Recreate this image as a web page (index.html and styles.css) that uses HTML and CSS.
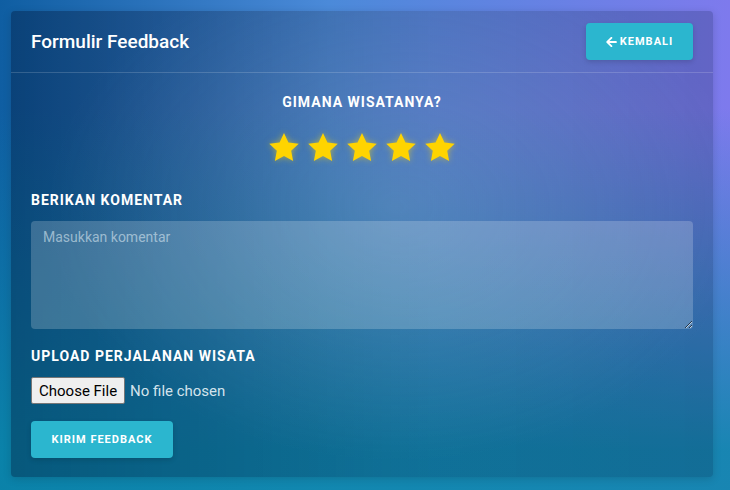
FILE: index.html
```html
<!DOCTYPE html>
<html lang="id">
<head>
<meta charset="utf-8">
<title>Formulir Feedback</title>
<link rel="stylesheet" href="styles.css">
</head>
<body>
<div class="card">
  <div class="card-header">
    <h1 class="title">Formulir Feedback</h1>
    <button class="btn btn-back" type="button">
      <svg class="arrow" viewBox="0 0 448 512" width="11" height="12"><path fill="currentColor" d="M257.5 445.1l-22.2 22.2c-9.4 9.4-24.6 9.4-33.9 0L7 273c-9.4-9.4-9.4-24.6 0-33.9L201.4 44.7c9.4-9.4 24.6-9.4 33.9 0l22.2 22.2c9.5 9.5 9.3 25-.4 34.3L136.6 216H424c13.3 0 24 10.7 24 24v32c0 13.3-10.7 24-24 24H136.6l120.5 114.8c9.8 9.3 10 24.8.4 34.3z"/></svg>
      KEMBALI
    </button>
  </div>
  <form class="card-body">
    <div class="question">GIMANA WISATANYA?</div>
    <div class="stars">
      <svg class="star" viewBox="0 0 24 23"><path d="M12 0.8l3.4 7.2 7.9 1-5.8 5.4 1.5 7.8L12 18.4l-7 3.8 1.5-7.8L0.7 9l7.9-1z"/></svg>
      <svg class="star" viewBox="0 0 24 23"><path d="M12 0.8l3.4 7.2 7.9 1-5.8 5.4 1.5 7.8L12 18.4l-7 3.8 1.5-7.8L0.7 9l7.9-1z"/></svg>
      <svg class="star" viewBox="0 0 24 23"><path d="M12 0.8l3.4 7.2 7.9 1-5.8 5.4 1.5 7.8L12 18.4l-7 3.8 1.5-7.8L0.7 9l7.9-1z"/></svg>
      <svg class="star" viewBox="0 0 24 23"><path d="M12 0.8l3.4 7.2 7.9 1-5.8 5.4 1.5 7.8L12 18.4l-7 3.8 1.5-7.8L0.7 9l7.9-1z"/></svg>
      <svg class="star" viewBox="0 0 24 23"><path d="M12 0.8l3.4 7.2 7.9 1-5.8 5.4 1.5 7.8L12 18.4l-7 3.8 1.5-7.8L0.7 9l7.9-1z"/></svg>
    </div>
    <label class="label label-first" for="komentar">BERIKAN KOMENTAR</label>
    <textarea id="komentar" class="comment" placeholder="Masukkan komentar"></textarea>
    <label class="label label-second" for="foto">UPLOAD PERJALANAN WISATA</label>
    <input id="foto" class="file" type="file">
    <div class="actions">
      <button class="btn btn-submit" type="button">KIRIM FEEDBACK</button>
    </div>
  </form>
</div>
</body>
</html>
```

FILE: styles.css
```css
html, body {
  margin: 0;
  padding: 0;
  height: 100%;
}
body {
  font-family: Roboto, "Liberation Sans", Arial, sans-serif;
  color: #fff;
  background:
    linear-gradient(180deg, rgba(10, 135, 170, 0) 22%, rgba(10, 135, 170, 0.88) 92%),
    linear-gradient(90deg, #0f5ea2 0%, #4b8ad9 45%, #7e7aed 100%);
  background-color: #1a6aa8;
  padding: 11px 17px 13px 11px;
  box-sizing: border-box;
}
.card {
  height: 466px;
  border-radius: 4px;
  background:
    radial-gradient(ellipse 50% 55% at 55% 42%, rgba(255, 255, 255, 0.14) 0%, rgba(255, 255, 255, 0) 100%),
    linear-gradient(90deg, rgba(0, 15, 45, 0.36) 0%, rgba(0, 15, 45, 0.18) 60%, rgba(0, 15, 45, 0.2) 100%);
  box-shadow: 0 2px 8px rgba(0, 0, 0, 0.15);
  display: flex;
  flex-direction: column;
  box-sizing: border-box;
}
.card-header {
  display: flex;
  align-items: center;
  justify-content: space-between;
  padding: 12px 20px 12px 20px;
  border-bottom: 1px solid rgba(255, 255, 255, 0.16);
}
.title {
  margin: 0;
  font-size: 19px;
  font-weight: 500;
  line-height: 22px;
}
.btn {
  font-family: Roboto, "Liberation Sans", Arial, sans-serif;
  border: none;
  border-radius: 4px;
  background: #2bb6cf;
  color: #fff;
  font-size: 11px;
  font-weight: 700;
  letter-spacing: 1px;
  height: 37px;
  box-shadow: 0 2px 5px rgba(0, 0, 0, 0.15);
  cursor: pointer;
}
.btn-back {
  width: 107px;
  display: flex;
  align-items: center;
  justify-content: center;
  gap: 3px;
}
.arrow {
  display: block;
}
.card-body {
  padding: 21px 20px 19px 20px;
  display: flex;
  flex-direction: column;
  margin: 0;
}
.question {
  text-align: center;
  font-size: 14px;
  font-weight: 700;
  letter-spacing: 1px;
  line-height: 17px;
}
.stars {
  display: flex;
  justify-content: center;
  gap: 7px;
  margin-top: 21px;
  height: 30px;
}
.star {
  width: 32px;
  height: 30px;
  fill: #ffd400;
  filter: drop-shadow(0 0 3px rgba(255, 215, 0, 0.55));
}
.label {
  display: block;
  font-size: 14px;
  font-weight: 700;
  letter-spacing: 1px;
  line-height: 16px;
}
.label-first {
  margin-top: 30px;
}
.label-second {
  margin-top: 19px;
}
.comment {
  margin-top: 13px;
  height: 108px;
  box-sizing: border-box;
  width: 100%;
  border: none;
  border-radius: 4px;
  background: rgba(255, 255, 255, 0.2);
  padding: 8px 12px;
  font-family: Roboto, "Liberation Sans", Arial, sans-serif;
  font-size: 14px;
  color: #fff;
  resize: vertical;
  outline: none;
}
.comment::placeholder {
  color: rgba(215, 230, 240, 0.62);
}
.file {
  margin-top: 13px;
  font-family: Roboto, "Liberation Sans", Arial, sans-serif;
  font-size: 15px;
  color: rgba(235, 245, 250, 0.9);
  height: 27px;
  align-self: flex-start;
}
.file::file-selector-button {
  font-family: Roboto, "Liberation Sans", Arial, sans-serif;
  font-size: 15px;
  height: 27px;
  padding: 0 7px;
  margin-right: 5px;
  background: #efefef;
  border: 1px solid #767676;
  border-radius: 2px;
  color: #000;
}
.actions {
  margin-top: 17px;
}
.btn-submit {
  width: 142px;
}
```
